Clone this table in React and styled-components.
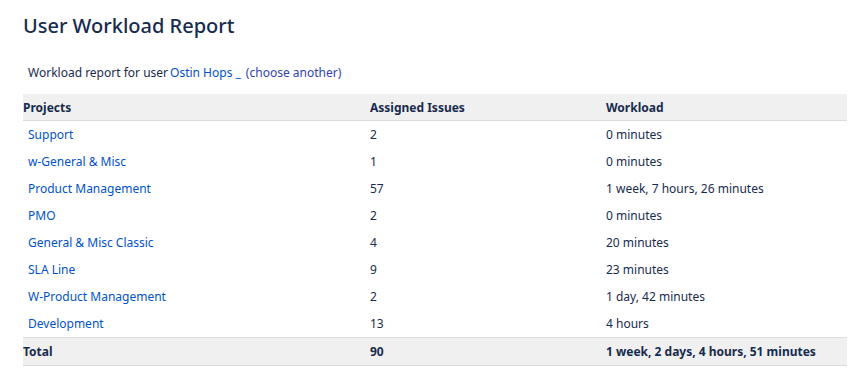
import styled, { createGlobalStyle } from "styled-components"

const GlobalStyle = createGlobalStyle`
body {
    margin: 0;
    background: #fff;
    font-family: "Noto Sans", "Open Sans", sans-serif;
    color: #172b4d;
}
`

const rows = [
    { project: "Support", issues: "2", workload: "0 minutes" },
    { project: "w-General & Misc", issues: "1", workload: "0 minutes" },
    { project: "Product Management", issues: "57", workload: "1 week, 7 hours, 26 minutes" },
    { project: "PMO", issues: "2", workload: "0 minutes" },
    { project: "General & Misc Classic", issues: "4", workload: "20 minutes" },
    { project: "SLA Line", issues: "9", workload: "23 minutes" },
    { project: "W-Product Management", issues: "2", workload: "1 day, 42 minutes" },
    { project: "Development", issues: "13", workload: "4 hours" },
]

const App = () => {
    return (
        <Page>
            <GlobalStyle />
            <Title>User Workload Report</Title>
            <Intro>
                Workload report for user<Link href="#">Ostin Hops _</Link>
                <Visited href="#">(choose another)</Visited>
            </Intro>
            <Table>
                <thead>
                    <tr>
                        <Th $w={347}>Projects</Th>
                        <Th $w={236}>Assigned Issues</Th>
                        <Th>Workload</Th>
                    </tr>
                </thead>
                <tbody>
                    {rows.map((r) => (
                        <tr key={r.project}>
                            <Td><ProjectLink href="#">{r.project}</ProjectLink></Td>
                            <Td>{r.issues}</Td>
                            <Td>{r.workload}</Td>
                        </tr>
                    ))}
                </tbody>
                <tfoot>
                    <tr>
                        <TotalCell>Total</TotalCell>
                        <TotalCell>90</TotalCell>
                        <TotalCell>1 week, 2 days, 4 hours, 51 minutes</TotalCell>
                    </tr>
                </tfoot>
            </Table>
        </Page>
    )
}

const Page = styled.div`
    padding: 12px 0 0 23px;
`
const Title = styled.h1`
    margin: 0;
    font-size: 20px;
    font-weight: 500;
    line-height: 28px;
    color: #172b4d;
`
const Intro = styled.p`
    margin: 24px 0 0 5px;
    font-size: 12px;
    line-height: 18px;
    color: #172b4d;
`
const Link = styled.a`
    margin-left: 2px;
    color: #0052cc;
    text-decoration: none;
`
const Visited = styled.a`
    margin-left: 5px;
    color: #3341b3;
    text-decoration: none;
`
const Table = styled.table`
    margin-top: 12px;
    width: 824px;
    border-collapse: collapse;
    font-size: 12px;
`
const Th = styled.th`
    width: ${(p) => (p.$w ? `${p.$w}px` : "auto")};
    height: 26px;
    padding: 0;
    text-align: left;
    font-weight: 700;
    background: #f0f0f0;
    border-bottom: 1px solid #dcdcdc;
    color: #172b4d;
`
const Td = styled.td`
    height: 27px;
    padding: 0;
    color: #172b4d;
`
const ProjectLink = styled.a`
    margin-left: 5px;
    color: #0052cc;
    text-decoration: none;
`
const TotalCell = styled.td`
    height: 27px;
    padding: 0;
    font-weight: 700;
    background: #f0f0f0;
    border-top: 1px solid #dcdcdc;
    border-bottom: 1px solid #dcdcdc;
    color: #172b4d;
`

export default App
